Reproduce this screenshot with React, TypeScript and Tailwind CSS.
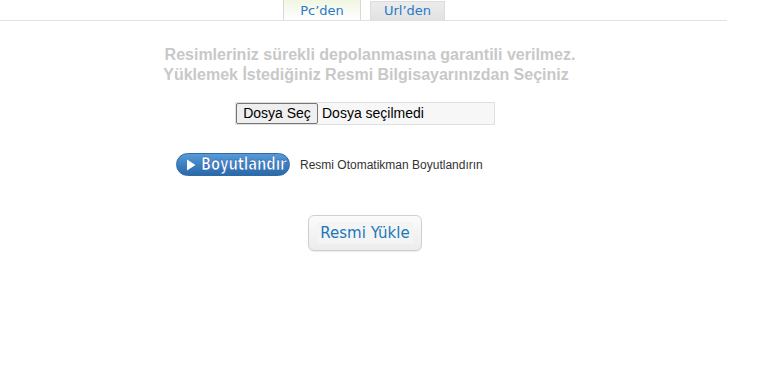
import React from 'react';

// ─── Tabs ────────────────────────────────────────────────────────────────────
const Tabs: React.FC = () => (
  <div className="flex h-[21px] w-[727px] items-end border-b border-[#e2e2e2]">
    <div className="ml-[283px] flex h-[21px] w-[78px] items-center justify-center border-x border-t border-[#d8d8d8] bg-gradient-to-b from-[#f1f6e2] to-white pt-[1px] font-['DejaVu_Sans',sans-serif] text-[13px] text-[#2a79c9]">
      Pc’den
    </div>
    <div className="ml-[9px] flex h-[19px] w-[75px] items-center justify-center border-x border-t border-[#dcdcdc] bg-gradient-to-b from-[#ececec] to-[#e2e2e2] font-['DejaVu_Sans',sans-serif] text-[13px] text-[#2a79c9]">
      Url’den
    </div>
  </div>
);

// ─── Resize toggle ───────────────────────────────────────────────────────────
const ResizeButton: React.FC = () => (
  <div className="flex h-[23px] w-[114px] items-center gap-[5px] overflow-hidden rounded-full border border-[#2d6aa6] bg-gradient-to-b from-[#5a9bd6] via-[#3b80c2] to-[#2c69a8] pl-[9px]">
    <svg width="10" height="12" viewBox="0 0 10 12" className="shrink-0">
      <path d="M1 0.5 L9.5 6 L1 11.5 Z" fill="#fff" />
    </svg>
    <span
      className="inline-block origin-left whitespace-nowrap font-['DejaVu_Sans',sans-serif] text-[17px] font-bold leading-none tracking-[-0.2px] text-white [transform:scaleX(0.78)]"
      style={{ WebkitTextStroke: '0.7px #1f5fb0' }}
    >
      Boyutlandır
    </span>
  </div>
);

export default function App() {
  return (
    <div className="h-[372px] w-[759px] bg-white">
      <Tabs />

      {/* Notice */}
      <div className="mt-[24px] flex w-[740px] flex-col items-center font-['Liberation_Sans',Arial,sans-serif] text-[16px] font-bold leading-[20px] text-[#c8c8c8]">
        <span>Resimleriniz sürekli depolanmasına garantili verilmez.</span>
        <span className="pr-[8px]">Yüklemek İstediğiniz Resmi Bilgisayarınızdan Seçiniz</span>
      </div>

      {/* File input */}
      <div className="ml-[235px] mt-[17px] flex h-[23px] w-[260px] items-center border border-[#e0e0e0] bg-[#f7f7f7] font-['Liberation_Sans',Arial,sans-serif] text-[14px] text-black">
        <div className="flex h-[21px] w-[82px] items-center justify-center rounded-[2px] border border-[#767676] bg-[#efefef]">
          Dosya Seç
        </div>
        <span className="ml-[4px]">Dosya seçilmedi</span>
      </div>

      {/* Resize option */}
      <div className="ml-[176px] mt-[28px] flex items-center gap-[10px]">
        <ResizeButton />
        <span className="font-['Liberation_Sans',Arial,sans-serif] text-[12px] text-[#333]">
          Resmi Otomatikman Boyutlandırın
        </span>
      </div>

      {/* Upload */}
      <div className="ml-[308px] mt-[39px] flex h-[36px] w-[114px] items-center justify-center rounded-[6px] border border-[#cfcfcf] bg-gradient-to-b from-[#fbfbfb] to-[#ececec] shadow-[0_1px_1px_rgba(0,0,0,0.08)]">
        <span className="bg-[#f4f4f4] px-[3px] font-['DejaVu_Sans',sans-serif] text-[15px] text-[#1a78b8]">
          Resmi Yükle
        </span>
      </div>
    </div>
  );
}
